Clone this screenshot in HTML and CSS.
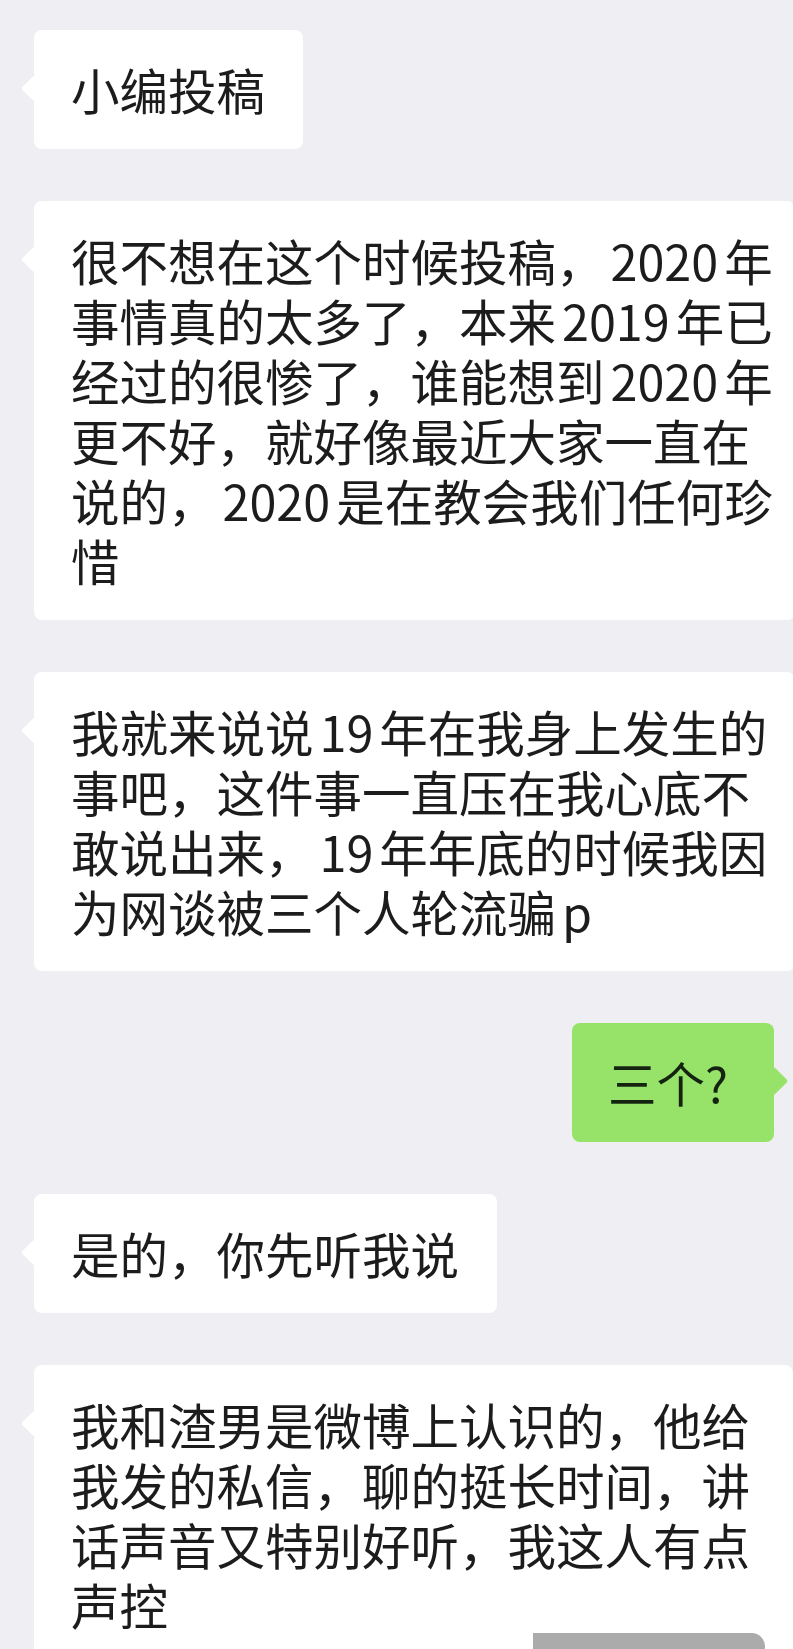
FILE: index.html
```html
<!DOCTYPE html>
<html lang="zh-CN">
<head>
<meta charset="utf-8">
<title>聊天记录</title>
<link rel="stylesheet" href="styles.css">
</head>
<body>
<div class="page">
  <div class="chat">
    <div class="row left">
      <div class="bubble white">小编投稿</div>
    </div>
    <div class="row left">
      <div class="bubble white wide">很不想在这个时候投稿，<span class="num">2020</span>年<br>事情真的太多了，本来<span class="num">2019</span>年已<br>经过的很惨了，谁能想到<span class="num">2020</span>年<br>更不好，就好像最近大家一直在<br>说的，<span class="num">2020</span>是在教会我们任何珍<br>惜</div>
    </div>
    <div class="row left">
      <div class="bubble white wide">我就来说说<span class="num">19</span>年在我身上发生的<br>事吧，这件事一直压在我心底不<br>敢说出来，<span class="num">19</span>年年底的时候我因<br>为网谈被三个人轮流骗<span class="num">p</span></div>
    </div>
    <div class="row right">
      <div class="bubble green">三个?</div>
    </div>
    <div class="row left">
      <div class="bubble white">是的，你先听我说</div>
    </div>
    <div class="row left">
      <div class="bubble white wide">我和渣男是微博上认识的，他给<br>我发的私信，聊的挺长时间，讲<br>话声音又特别好听，我这人有点<br>声控</div>
    </div>
  </div>
  <div class="watermark"></div>
</div>
</body>
</html>
```

FILE: styles.css
```css
html, body {
  margin: 0;
  padding: 0;
  background: #efeef2;
}

.page {
  position: relative;
  width: 793px;
  height: 1649px;
  overflow: hidden;
  background: #efeef2;
  font-family: "Noto Sans CJK SC", "Noto Sans", sans-serif;
  color: #1c1c1c;
}

.chat {
  display: flex;
  flex-direction: column;
  gap: 52px;
  padding-top: 30px;
}

.row {
  display: flex;
}

.row.left {
  justify-content: flex-start;
  padding-left: 34px;
}

.row.right {
  justify-content: flex-end;
  padding-right: 19px;
}

.bubble {
  position: relative;
  font-size: 48.5px;
  line-height: 60px;
  white-space: nowrap;
  padding: 29px 38px 30px 37px;
  border-radius: 8px;
}

.bubble.white {
  background: #ffffff;
}

.bubble.wide {
  width: 686px;
}

.bubble.white::before {
  content: "";
  position: absolute;
  left: -9px;
  top: 49px;
  width: 19px;
  height: 19px;
  background: #ffffff;
  border-radius: 2px;
  transform: rotate(45deg);
}

.bubble.green {
  background: #97e36a;
  padding: 29px 46px 30px 36px;
  color: #142410;
}

.bubble.green::after {
  content: "";
  position: absolute;
  right: -10px;
  top: 48px;
  width: 20px;
  height: 20px;
  background: #97e36a;
  border-radius: 2px;
  transform: rotate(45deg);
}

.num {
  margin: 0 6px;
}

.watermark {
  position: absolute;
  left: 533px;
  top: 1633px;
  width: 232px;
  height: 30px;
  background: #ababab;
  border-top-right-radius: 24px;
  border-bottom-right-radius: 30px;
}
```
